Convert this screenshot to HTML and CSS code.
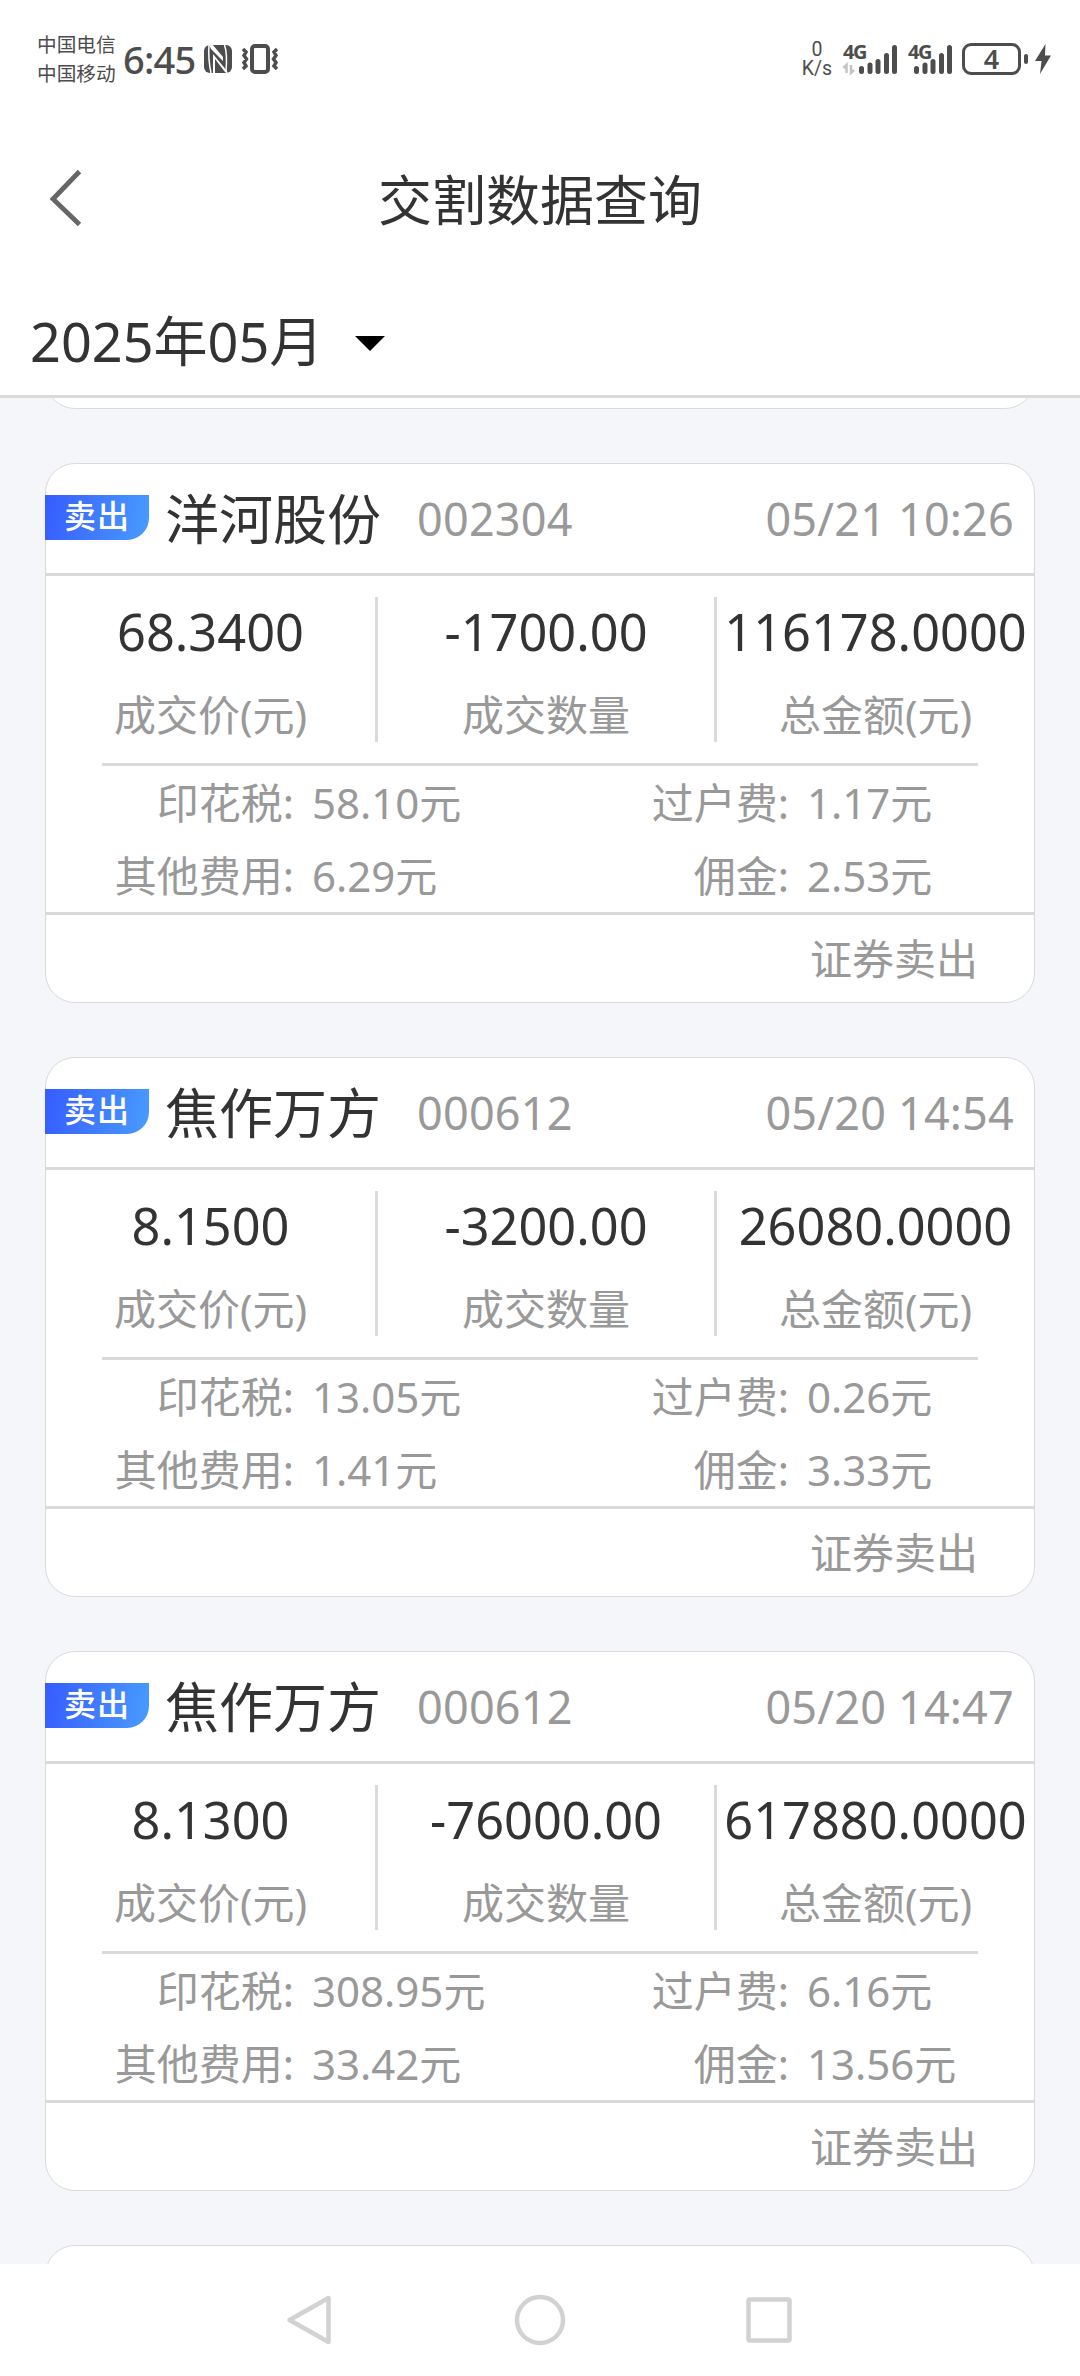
FILE: index.html
```html
<!DOCTYPE html>
<html lang="zh-CN">
<head>
<meta charset="utf-8">
<title>交割数据查询</title>
<link rel="stylesheet" href="styles.css">
</head>
<body>
<div class="screen">
  <div class="status">
    <div class="carriers"><span>中国电信</span><span>中国移动</span></div>
    <span class="clock">6:45</span>
    <svg class="nfc" width="30" height="30" viewBox="0 0 30 30"><rect x="1" y="1" width="28" height="28" rx="6" fill="#4d4d4d"/><path d="M6 0L8 5 20 17V13L9 0zM10 10v19h2V15l10 13 3 2-1-3-14-17z" fill="#fff"/><path d="M6 1q-1 14 2 28M21.500 1q3 8 1.500 27" fill="none" stroke="#fff" stroke-width="1.500"/></svg>
    <svg class="vibrate" width="38" height="32" viewBox="0 0 38 32"><rect x="11" y="3" width="16" height="26" rx="3" fill="none" stroke="#4d4d4d" stroke-width="4"/><path d="M2 6l3 3-2 3.500 2.500 3.500-2.500 3.500 2 3.500-3 3M36 6l-3 3 2 3.500-2.500 3.500 2.500 3.500-2 3.500 3 3" fill="none" stroke="#4d4d4d" stroke-width="3.500"/></svg>
    <div class="speed"><span>0</span><span>K/s</span></div>
    <div class="signal first">
      <span class="net">4G</span>
      <svg width="56" height="32" viewBox="0 0 56 32"><g stroke="#4d4d4d" stroke-width="5" stroke-linecap="round"><path d="M19.500 25.500v3M28 22v6.500M36 18.500V28.500M44.500 12.500V28.500M52.500 4.500V28.500"/></g><path d="M4.500 30v-8l-3 3M9 22v8l3-3" fill="none" stroke="#c4c4c4" stroke-width="2.500"/></svg>
    </div>
    <div class="signal second">
      <span class="net">4G</span>
      <svg width="46" height="32" viewBox="0 0 46 32"><g stroke="#4d4d4d" stroke-width="5" stroke-linecap="round"><path d="M9.500 25.500v3M18 22v6.500M26 18.500V28.500M34.500 12.500V28.500M42.500 4.500V28.500"/></g></svg>
    </div>
    <span class="battery">4</span>
    <span class="cap"></span>
    <svg class="bolt" width="18" height="32" viewBox="0 0 18 32"><path d="M11.500 1L1 18h6.500L6 31 17 12.500h-6z" fill="#4d4d4d"/></svg>
  </div>

  <div class="titlebar">
    <svg class="back" width="36" height="60" viewBox="0 0 36 60"><path d="M30.500 3.500L4 31l26.500 25.500" fill="none" stroke="#666" stroke-width="4.800"/></svg>
    <h1>交割数据查询</h1>
  </div>

  <div class="month"><span>2025年05月</span><i class="caret"></i></div>

  <main class="list">
    <div class="card stub"></div>

    <section class="card">
      <header class="head"><span class="tag">卖出</span><b class="name">洋河股份</b><span class="code">002304</span><time>05/21 10:26</time></header>
      <div class="figures">
        <div class="fig"><strong>68.3400</strong><span>成交价(元)</span></div>
        <div class="fig"><strong>-1700.00</strong><span>成交数量</span></div>
        <div class="fig"><strong>116178.0000</strong><span>总金额(元)</span></div>
      </div>
      <dl class="fees">
        <dt>印花税:</dt><dd>58.10元</dd><dt>过户费:</dt><dd>1.17元</dd>
        <dt>其他费用:</dt><dd>6.29元</dd><dt>佣金:</dt><dd>2.53元</dd>
      </dl>
      <footer class="foot">证券卖出</footer>
    </section>

    <section class="card">
      <header class="head"><span class="tag">卖出</span><b class="name">焦作万方</b><span class="code">000612</span><time>05/20 14:54</time></header>
      <div class="figures">
        <div class="fig"><strong>8.1500</strong><span>成交价(元)</span></div>
        <div class="fig"><strong>-3200.00</strong><span>成交数量</span></div>
        <div class="fig"><strong>26080.0000</strong><span>总金额(元)</span></div>
      </div>
      <dl class="fees">
        <dt>印花税:</dt><dd>13.05元</dd><dt>过户费:</dt><dd>0.26元</dd>
        <dt>其他费用:</dt><dd>1.41元</dd><dt>佣金:</dt><dd>3.33元</dd>
      </dl>
      <footer class="foot">证券卖出</footer>
    </section>

    <section class="card">
      <header class="head"><span class="tag">卖出</span><b class="name">焦作万方</b><span class="code">000612</span><time>05/20 14:47</time></header>
      <div class="figures">
        <div class="fig"><strong>8.1300</strong><span>成交价(元)</span></div>
        <div class="fig"><strong>-76000.00</strong><span>成交数量</span></div>
        <div class="fig"><strong>617880.0000</strong><span>总金额(元)</span></div>
      </div>
      <dl class="fees">
        <dt>印花税:</dt><dd>308.95元</dd><dt>过户费:</dt><dd>6.16元</dd>
        <dt>其他费用:</dt><dd>33.42元</dd><dt>佣金:</dt><dd>13.56元</dd>
      </dl>
      <footer class="foot">证券卖出</footer>
    </section>

    <div class="card"></div>
  </main>

  <nav class="nav">
    <svg width="52" height="52" viewBox="0 0 52 52"><path d="M43.500 4v44L4.500 26z" /></svg>
    <svg width="52" height="52" viewBox="0 0 52 52"><circle cx="26" cy="26" r="23"/></svg>
    <svg width="52" height="52" viewBox="0 0 52 52"><rect x="5.500" y="5.500" width="41" height="41" rx="1.500"/></svg>
  </nav>
</div>
</body>
</html>
```
FILE: styles.css
```css
* { box-sizing: border-box; }

body {
  margin: 0;
  background: #fff;
  color: #333;
  font-family: "Noto Sans", "Noto Sans CJK SC", sans-serif;
  font-kerning: none;
}

.screen {
  display: flex;
  flex-direction: column;
  width: 1080px;
  height: 2376px;
  overflow: hidden;
}

/* system status bar */
.status {
  display: flex;
  align-items: center;
  height: 118px;
  padding-left: 37px;
  color: #4d4d4d;
  white-space: nowrap;
}

.carriers {
  display: flex;
  flex-direction: column;
  width: 86px;
  font-size: 19.7px;
  line-height: 29px;
}

.clock {
  width: 80px;
  font-size: 38px;
  font-weight: 500;
  line-height: 58px;
  letter-spacing: -0.8px;
}

.nfc { margin-right: 8px; }
.vibrate { margin-right: 520px; }

.speed {
  display: flex;
  flex-direction: column;
  align-items: center;
  width: 36px;
  margin-right: 7px;
  font-family: Roboto, sans-serif;
  font-size: 19.5px;
  line-height: 19px;
}

.signal { position: relative; height: 32px; }
.signal.first { margin-right: 9px; }
.signal.second { margin-right: 9px; }

.net {
  position: absolute;
  left: 1px;
  top: 0;
  font-size: 20px;
  font-weight: 700;
  line-height: 17px;
  letter-spacing: -1.5px;
}

.signal svg { display: block; }

.battery {
  width: 59px;
  height: 32px;
  border: 3px solid #4d4d4d;
  border-radius: 9px;
  font-size: 27px;
  font-weight: 600;
  line-height: 26px;
  text-align: center;
}

.cap {
  width: 4px;
  height: 10px;
  margin: 0 6px 0 3px;
  border-radius: 2px;
  background: #4d4d4d;
}

/* page title */
.titlebar {
  position: relative;
  height: 164px;
  display: flex;
  align-items: center;
  justify-content: center;
}

.back { position: absolute; left: 49px; top: 50px; }

.titlebar h1 {
  margin: 0;
  font-size: 54px;
  font-weight: 400;
  line-height: 80px;
}

.month {
  display: flex;
  align-items: center;
  height: 116px;
  padding: 5px 0 0 30px;
  border-bottom: 3px solid #dadada;
  font-size: 54px;
}

.month span { line-height: 80px; }

.caret {
  margin: 4px 0 0 32px;
  border: 15px solid transparent;
  border-top-color: #000;
  border-bottom: 0;
}

/* trade records */
.list {
  flex: 1;
  min-height: 0;
  overflow: hidden;
  display: flex;
  flex-direction: column;
  gap: 54px;
  padding: 0 45px;
  background: #f5f6f9;
}

.card {
  flex: none;
  height: 540px;
  border: 1px solid #dadada;
  border-radius: 30px;
  background: #fff;
}

.card.stub { margin-top: -529px; }

.head {
  display: flex;
  align-items: center;
  height: 112px;
  padding-right: 20px;
  border-bottom: 3px solid #dadada;
}

.tag {
  width: 104px;
  height: 45px;
  margin: -2px 16px 0 -1px;
  border-bottom-right-radius: 22px;
  background: linear-gradient(100deg, #365cfe, #489cfe);
  color: #fff;
  font-size: 32px;
  font-weight: 500;
  line-height: 42px;
  letter-spacing: 1px;
  text-align: center;
}

.name {
  width: 252px;
  font-size: 54px;
  font-weight: 400;
  line-height: 80px;
}

.code, time { color: #999; font-size: 45px; line-height: 70px; letter-spacing: 0.2px; }
time { margin-left: auto; }

.figures {
  display: grid;
  grid-template-columns: 332px 339px 317px;
  height: 187px;
  padding: 21px 0;
}

.fig {
  display: flex;
  flex-direction: column;
  align-items: center;
  color: #999;
  font-size: 42px;
  white-space: nowrap;
  border-right: 3px solid #dadada;
}

.fig:last-child { border-right: 0; }

.fig strong {
  height: 83px;
  color: #333;
  font-size: 50.5px;
  font-weight: 400;
  line-height: 70px;
}

.fig span { margin-bottom: -8px; line-height: 70px; }

.fees {
  display: grid;
  grid-template-columns: 248px 247px 248px 1fr;
  grid-template-rows: 3px;
  grid-auto-rows: 73px;
  margin: 0;
  border-bottom: 3px solid #dadada;
  color: #999;
  font-size: 42px;
  line-height: 73px;
}

/* the rule over the fees is shorter than the card */
.fees::before {
  content: "";
  grid-column: 1 / -1;
  height: 3px;
  margin: 0 56px;
  background: #dadada;
}

.fees dt { text-align: right; }
.fees dd { margin: 0; padding-left: 18px; }

.foot {
  padding-right: 56px;
  color: #999;
  font-size: 42px;
  line-height: 87px;
  text-align: right;
}

/* system navigation */
.nav {
  display: flex;
  justify-content: center;
  gap: 177px;
  height: 112px;
  padding-top: 30px;
}

.nav svg {
  fill: none;
  stroke: #d2d2d2;
  stroke-width: 4.5;
  stroke-linejoin: round;
}
```
